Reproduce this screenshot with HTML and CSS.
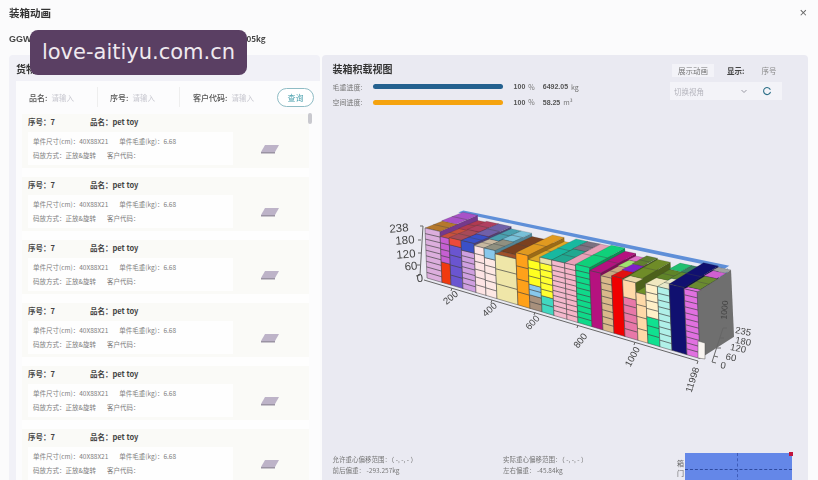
FILE: index.html
```html
<!DOCTYPE html>
<html lang="zh">
<head>
<meta charset="utf-8">
<title>装箱动画</title>
<link rel="stylesheet" href="styles.css">
</head>
<body>
<div class="app">
  <header class="titlebar"><span class="title">装箱动画</span><span class="close">×</span></header>
  <div class="summary"><span>GGW1</span><span>总件数：1229</span><span>总体积：58.25m³</span><span>总毛重：6492.05kg</span></div>
  <main class="main">
    <section class="left">
      <h2 class="heading">货物列表</h2>
      <div class="sheet">
        <form class="search">
          <label class="field f1"><b>品名:</b><i>请输入</i></label>
          <label class="field f2"><b>序号:</b><i>请输入</i></label>
          <label class="field f3"><b>客户代码:</b><i>请输入</i></label>
          <span class="query">查询</span>
        </form>
        <div class="list">
          <article class="item"><div class="item-head"><span class="no">序号：7</span><span>品名：pet toy</span></div><div class="item-body"><div class="specs"><p><span>单件尺寸(cm)：40X88X21</span><span>单件毛重(kg)：6.68</span></p><p><span>码放方式：正放&amp;旋转</span><span>客户代码：</span></p></div><svg class="box" viewBox="0 0 20 10"><path d="M5 1H19L15 8H1Z" fill="#bdb3c8"/><path d="M1 8H15L15 9.500H1Z" fill="#9a93a3"/></svg></div></article>
          <article class="item"><div class="item-head"><span class="no">序号：7</span><span>品名：pet toy</span></div><div class="item-body"><div class="specs"><p><span>单件尺寸(cm)：40X88X21</span><span>单件毛重(kg)：6.68</span></p><p><span>码放方式：正放&amp;旋转</span><span>客户代码：</span></p></div><svg class="box" viewBox="0 0 20 10"><path d="M5 1H19L15 8H1Z" fill="#bdb3c8"/><path d="M1 8H15L15 9.500H1Z" fill="#9a93a3"/></svg></div></article>
          <article class="item"><div class="item-head"><span class="no">序号：7</span><span>品名：pet toy</span></div><div class="item-body"><div class="specs"><p><span>单件尺寸(cm)：40X88X21</span><span>单件毛重(kg)：6.68</span></p><p><span>码放方式：正放&amp;旋转</span><span>客户代码：</span></p></div><svg class="box" viewBox="0 0 20 10"><path d="M5 1H19L15 8H1Z" fill="#bdb3c8"/><path d="M1 8H15L15 9.500H1Z" fill="#9a93a3"/></svg></div></article>
          <article class="item"><div class="item-head"><span class="no">序号：7</span><span>品名：pet toy</span></div><div class="item-body"><div class="specs"><p><span>单件尺寸(cm)：40X88X21</span><span>单件毛重(kg)：6.68</span></p><p><span>码放方式：正放&amp;旋转</span><span>客户代码：</span></p></div><svg class="box" viewBox="0 0 20 10"><path d="M5 1H19L15 8H1Z" fill="#bdb3c8"/><path d="M1 8H15L15 9.500H1Z" fill="#9a93a3"/></svg></div></article>
          <article class="item"><div class="item-head"><span class="no">序号：7</span><span>品名：pet toy</span></div><div class="item-body"><div class="specs"><p><span>单件尺寸(cm)：40X88X21</span><span>单件毛重(kg)：6.68</span></p><p><span>码放方式：正放&amp;旋转</span><span>客户代码：</span></p></div><svg class="box" viewBox="0 0 20 10"><path d="M5 1H19L15 8H1Z" fill="#bdb3c8"/><path d="M1 8H15L15 9.500H1Z" fill="#9a93a3"/></svg></div></article>
          <article class="item"><div class="item-head"><span class="no">序号：7</span><span>品名：pet toy</span></div><div class="item-body"><div class="specs"><p><span>单件尺寸(cm)：40X88X21</span><span>单件毛重(kg)：6.68</span></p><p><span>码放方式：正放&amp;旋转</span><span>客户代码：</span></p></div><svg class="box" viewBox="0 0 20 10"><path d="M5 1H19L15 8H1Z" fill="#bdb3c8"/><path d="M1 8H15L15 9.500H1Z" fill="#9a93a3"/></svg></div></article>
          <span class="thumb"></span>
        </div>
      </div>
    </section>
    <section class="right">
      <div class="top">
        <div class="top-main">
          <h2 class="heading">装箱积载视图</h2>
          <div class="progress"><span class="plabel">毛重进度:</span><span class="bar weight"></span><b class="pct">100</b><span class="unit">%</span><b class="val">6492.05</b><span class="unit">kg</span></div>
          <div class="progress"><span class="plabel">空间进度:</span><span class="bar space"></span><b class="pct">100</b><span class="unit">%</span><b class="val">58.25</b><span class="unit">m³</span></div>
        </div>
        <div class="controls">
          <div class="ctrl-row"><span class="demo">展示动画</span><b class="show">显示:</b><span class="seq">序号</span></div>
          <div class="select"><span class="ph">切换视角</span><svg class="chev" viewBox="0 0 8 8"><path d="M1.500 3L4 5.500L6.500 3" fill="none" stroke="#9a9aa5"/></svg><svg class="refresh" viewBox="0 0 12 12"><path d="M10 4.500A4.200 4.200 0 1 0 10.200 7" fill="none" stroke="#2c6f88" stroke-width="1.300"/></svg></div>
        </div>
      </div>
      <svg id="chart" class="chart" viewBox="380 200 380 190"></svg>
      <div class="foot">
        <div class="stats">
          <div><p>允许重心偏移范围：（ -, -, - ）</p><p>前后偏重： -293.257kg</p></div>
          <div><p>实际重心偏移范围：（ -, -, - ）</p><p>左右偏重： -45.84kg</p></div>
        </div>
        <div class="door"><span class="door-label">箱<br>门</span>
          <div class="map"><span class="hline"></span><span class="vline"></span><span class="dot"></span></div>
        </div>
      </div>
    </section>
  </main>
</div>
<div class="watermark">love-aitiyu.com.cn</div>
<script src="chart.js"></script>
</body>
</html>
```
FILE: styles.css
```css
* { box-sizing: border-box; }
html, body { margin: 0; height: 100%; overflow: hidden; }
body { background: #fbfbfc; font-family: "Noto Sans CJK SC", "Noto Sans", sans-serif; color: #333; position: relative; }
p, h2 { margin: 0; }
.app { width: 818px; height: 480px; display: flex; flex-direction: column; overflow: hidden; filter: blur(.35px); }
.titlebar { height: 27px; padding: 4px 11px 0 9px; display: flex; justify-content: space-between; align-items: flex-start; }
.title { font-size: 10.500px; font-weight: 700; line-height: 17px; color: #333; }
.close { font-size: 13px; line-height: 17px; color: #666; font-family: "Liberation Sans", sans-serif; }
.summary { height: 28px; padding: 5px 0 0 9px; display: flex; gap: 13px; font-size: 8.100px; line-height: 14px; font-weight: 700; color: #444; }
.summary span:first-child { font-family: "Liberation Sans", sans-serif; font-size: 9px; }
.main { flex: 1; min-height: 0; display: flex; gap: 2px; padding: 0 10px 0 9px; }
.left { width: 311px; background: #f1f1f7; border-radius: 4px 4px 0 0; padding: 7px 0 0 7px; display: flex; flex-direction: column; }
.heading { font-size: 10px; font-weight: 700; line-height: 14px; color: #333; }
.sheet { flex: 1; margin-top: 5px; background: #fcfcfd; display: flex; flex-direction: column; min-height: 0; }
.search { height: 32px; display: flex; align-items: center; padding-left: 13px; position: relative; font-size: 8px; }
.field { display: flex; gap: 4px; align-items: center; height: 20px; }
.field b { font-weight: 500; color: #555; }
.field i { font-style: normal; color: #c8c8d0; font-size: 7.500px; }
.f1 { width: 69px; border-right: 1px solid #eee; }
.f2 { width: 82px; padding-left: 12px; border-right: 1px solid #eee; }
.f3 { width: 97px; padding-left: 13px; }
.query { width: 37px; height: 19px; border: 1px solid #8fbcc5; border-radius: 10px; font-size: 8px; line-height: 17px; text-align: center; color: #4aa0ae; background: #fff; }
.list { position: relative; flex: 1; min-height: 0; overflow: hidden; padding: 1px 11px 0 6px; }
.thumb { position: absolute; right: 8px; top: 0; width: 4px; height: 11px; background: #c9c9cf; border-radius: 2px; }
.item { height: 63px; padding: 2px 0 0 6px; background: linear-gradient(#fafaf7 0, #fafaf7 54px, #fefefe 54px); }
.item-head { display: flex; font-size: 7.500px; font-weight: 700; color: #444; line-height: 12px; }
.no { width: 62px; }
.item-body { display: flex; align-items: center; margin-top: 4px; }
.specs { width: 205px; height: 33px; background: #fefefe; padding: 2px 0 0 5px; font-size: 6.500px; line-height: 14px; color: #808080; }
.specs p { display: flex; gap: 11px; }
.box { width: 20px; height: 10px; margin: 1px 0 0 27px; }
.right { width: 487px; background: #eaeaf2; border-radius: 4px 4px 0 0; padding: 7px 0 0 11px; display: flex; flex-direction: column; min-height: 0; overflow: hidden; }
.top { display: flex; justify-content: space-between; height: 57px; flex: none; }
.top-main { display: flex; flex-direction: column; }
.top-main .heading { margin-bottom: 3px; font-size: 10px; }
.progress { display: flex; align-items: center; height: 15.500px; font-size: 7px; color: #777; }
.plabel { width: 40px; }
.bar { width: 130px; height: 5px; border-radius: 3px; }
.weight { background: #24618f; }
.space { background: #f5a30f; }
.pct { margin-left: 11px; color: #555; font-family: "Liberation Sans", sans-serif; }
.unit { margin-left: 3px; }
.val { margin-left: 8px; color: #555; font-family: "Liberation Sans", sans-serif; }
.controls { width: 138px; padding-top: 1px; }
.ctrl-row { display: flex; align-items: center; height: 14px; font-size: 7.500px; padding-left: 2px; }
.demo { width: 42px; height: 13px; line-height: 13px; text-align: center; color: #777; background: #f3f3f8; }
.show { margin-left: 13px; color: #444; }
.seq { margin-left: 17px; color: #888; }
.select { margin-top: 5px; width: 112px; height: 18px; background: #f3f3f8; display: flex; align-items: center; padding-left: 4px; font-size: 7.500px; }
.ph { width: 66px; color: #b5b5bd; }
.chev { width: 8px; height: 8px; }
.refresh { width: 10px; height: 10px; margin-left: 14px; }
.chart { display: block; width: 380px; height: 190px; margin: 81px 0 0 47px; flex: none; overflow: visible; }
.foot { display: flex; justify-content: space-between; margin-top: 40px; padding-right: 16px; flex: none; }
.stats { display: flex; gap: 86px; padding-top: 24px; font-size: 6.500px; line-height: 11px; color: #777; }
.door { display: flex; gap: 1px; padding-top: 23px; }
.door-label { font-size: 7px; line-height: 10px; color: #666; padding-top: 5px; }
.map { position: relative; width: 107px; height: 40px; background: #6487e8; }
.hline { position: absolute; left: 0; right: 0; top: 16px; border-top: 1px dashed #2e4aa0; }
.vline { position: absolute; top: 0; bottom: 0; left: 52px; border-left: 1px dashed #3f5cb8; }
.dot { position: absolute; right: -1px; top: -1px; width: 4px; height: 4px; background: #c0143c; }
.watermark { position: absolute; left: 30px; top: 30px; width: 217px; height: 45px; background: #5a3f63; border-radius: 8px; color: #efe9ef; font-family: "DejaVu Sans", sans-serif; font-size: 21px; line-height: 45px; text-align: center; }
```
FILE: chart.js
```js
var svg = document.getElementById('chart');
var out = [];
function P(x, h, d) {
  var t = (x - 427) / 271;
  var px = x - (2 + t) * h + (37 - 4 * t) * d;
  var py = 278 + 80 * t - (50 + 18 * t) * h - (16 + 6 * t) * d;
  return px.toFixed(1) + ',' + py.toFixed(1);
}
function poly(pts, fill, stroke) {
  out.push('<polygon points="' + pts.join(' ') + '" fill="' + fill + '"' + (stroke ? ' stroke="' + stroke + '" stroke-width=".5"' : '') + '/>');
}
function line(a, b, w) {
  out.push('<line x1="' + a.replace(',', '" y1="') + '" x2="' + b.replace(',', '" y2="') + '" stroke="#444" stroke-width="' + w + '"/>');
}
// x0, x1, height, front segments [colour, from, to, cells], top strips [colour, d0, d1]
var cols = [
  [427, 442, 1.00, [['#dcaedd', 0, 1, 9]], [['#b5782c', 0, .45], ['#a852c8', .45, 1]]],
  [442, 451, .90, [['#f03a10', 0, .45, 1], ['#c65fd2', .45, 1, 4]], [['#c8503c', 0, .5], ['#b03a50', .5, 1]]],
  [451, 463, .92, [['#6a55d0', 0, .85, 4], ['#ee4a3a', .85, 1, 1]], [['#a84a58', 0, .5], ['#b04060', .5, 1]]],
  [463, 476, .92, [['#cf9fe0', 0, .8, 7], ['#3a50c8', .8, 1, 1]], [['#3a50c8', 0, .4], ['#7060a8', .4, 1]]],
  [476, 486, .88, [['#fde4e4', 0, 1, 6]], [['#c8b8a0', 0, .4], ['#4aa0b0', .4, 1]]],
  [486, 497, .88, [['#fde8e4', 0, .8, 5], ['#88c8ec', .8, 1, 1]], [['#909080', 0, .5], ['#78c0d8', .5, 1]]],
  [497, 518, .82, [['#efe6a8', 0, 1, 3]], [['#7a4020', .15, 1], ['#a0502a', 0, .15]]],
  [518, 530, .93, [['#ffa11a', 0, 1, 4]], [['#e09a20', 0, 1]]],
  [530, 542, .86, [['#a8907c', 0, .28, 2], ['#88c8ec', .28, .5, 2], ['#ffff20', .5, 1, 3]], [['#e0a828', 0, 1]]],
  [542, 554, .95, [['#40d8c0', 0, .3, 2], ['#ffff30', .3, .9, 5], ['#e8e0b0', .9, 1, 1]], [['#18b8a0', 0, 1]]],
  [554, 567, .95, [['#f4b8cc', 0, 1, 11]], [['#20a890', 0, .6], ['#7a7080', .6, 1]]],
  [567, 578, .95, [['#f6b4c8', 0, 1, 11]], [['#e8a0b8', 0, 1]]],
  [578, 592, .97, [['#10d98a', 0, 1, 10]], [['#10d07a', 0, 1]]],
  [592, 603, .92, [['#b5127f', 0, 1, 1]], [['#b5127f', 0, 1]]],
  [603, 614, .88, [['#d9b98a', 0, 1, 8]], [['#c8a880', 0, .5], ['#a0e070', .5, .8], ['#e070c8', .8, 1]]],
  [614, 625, .92, [['#f00000', 0, 1, 1]], [['#e01010', 0, .3], ['#8020c8', .3, .6], ['#608030', .6, 1]]],
  [625, 638, .90, [['#e878a8', 0, .7, 5], ['#ffd9a8', .7, 1, 1]], [['#e8d8a8', 0, .2], ['#6f8c28', .2, 1]]],
  [638, 648, .75, [['#ffd9a8', 0, 1, 4]], [['#6f9028', 0, 1]]],
  [648, 660, .92, [['#10e090', 0, .45, 3], ['#fff0c8', .45, 1, 4]], [['#f0e8c0', 0, .3], ['#5f8428', .3, .7], ['#20c070', .7, 1]]],
  [660, 672, .92, [['#b0f0e8', 0, 1, 9]], [['#e8e8c8', 0, .4], ['#608830', .4, .7], ['#3a8060', .7, 1]]],
  [672, 687, 1.00, [['#101070', 0, 1, 1]], [['#101070', 0, 1]]],
  [687, 700, .98, [['#e070e0', 0, 1, 11]], [['#e070e0', 0, .1], ['#6a8a30', .1, .6], ['#d060d0', .6, .85], ['#a0a0a0', .85, 1]]]
];
// back wall edge and right wall
poly([P(427, 1.02, .9), P(698, 1.02, .9), P(698, 1.02, 1.04), P(427, 1.02, 1.04)], '#5f8fd8');
poly(['728,268', '717,327', '706,344', '713,298', '721,274'], '#6a96e8');
cols.forEach(function (c) {
  // side face seen where the next stack is lower
  var side = c[4][c[4].length - 1][0];
  poly([P(c[1], 0, 0), P(c[1], c[2], 0), P(c[1] + 1, c[2], 1), P(c[1] + 1, 0, 1)], side);
  poly([P(c[1], 0, 0), P(c[1], c[2], 0), P(c[1] + 1, c[2], 1), P(c[1] + 1, 0, 1)], 'rgba(0,0,0,.3)');
  c[4].forEach(function (s) {
    poly([P(c[0], c[2], s[1]), P(c[1], c[2], s[1]), P(c[1] + 1, c[2], s[2]), P(c[0] + 1, c[2], s[2])], s[0], 'rgba(40,40,40,.35)');
    if (s[2] - s[1] > .35) {
      var mid = (s[1] + s[2]) / 2;
      line(P(c[0], c[2], mid), P(c[1] + 1, c[2], mid), .4);
    }
  });
  c[3].forEach(function (s) {
    var a = s[1] * c[2], b = s[2] * c[2];
    poly([P(c[0], a, 0), P(c[1], a, 0), P(c[1], b, 0), P(c[0], b, 0)], s[0], '#444');
    for (var i = 1; i < s[3]; i++) {
      var h = a + (b - a) * i / s[3];
      line(P(c[0], h, 0), P(c[1], h, 0), .7);
    }
  });
});
// small white stack at the door
poly(['698,341', '705,343', '705,359', '698,358'], '#f8f4f0', '#555');
// axes
var axis = 'fill="none" stroke="#666" stroke-width="1"';
out.push('<path d="M424 280L698 361M452 288L451 291M492 300L491 303M535 312L534 315M578 325L577 328M635 342L634 345M698 361L697 364" ' + axis + '/>');
out.push('<path d="M420 226L423 226L420 275L416 276M421 240L418 240M421 253L418 253M420 265L417 265" ' + axis + '/>');
out.push('<path d="M727 328L723 328L712 362L716 363M720 338L724 338M717 348L721 348M714 356L718 357" ' + axis + '/>');
function label(txt, x, y, rot, size) {
  out.push('<text x="' + x + '" y="' + y + '" text-anchor="middle" dominant-baseline="middle" font-family="Liberation Sans, sans-serif" font-size="' + size + '" fill="#444"' + (rot ? ' transform="rotate(' + rot + ' ' + x + ' ' + y + ')"' : '') + '>' + txt + '</text>');
}
[['238', 399, 229], ['180', 405, 241], ['120', 406, 255], ['60', 411, 267], ['0', 420, 279]].forEach(function (l) { label(l[0], l[1], l[2], -5, 11.5); });
[['200', 451, 298, -40], ['400', 490, 310, -42], ['600', 533, 323, -48], ['800', 581, 341, -52], ['1000', 633, 357, -62], ['11998', 693, 380, -72]].forEach(function (l) { label(l[0], l[1], l[2], l[3], 9.5); });
[['235', 743, 332], ['180', 743, 342], ['120', 738, 349], ['60', 731, 358], ['0', 723, 366]].forEach(function (l) { label(l[0], l[1], l[2], 10, 9.5); });
label('1000', 725, 310, -85, 8.5);
svg.innerHTML = out.join('');
```
